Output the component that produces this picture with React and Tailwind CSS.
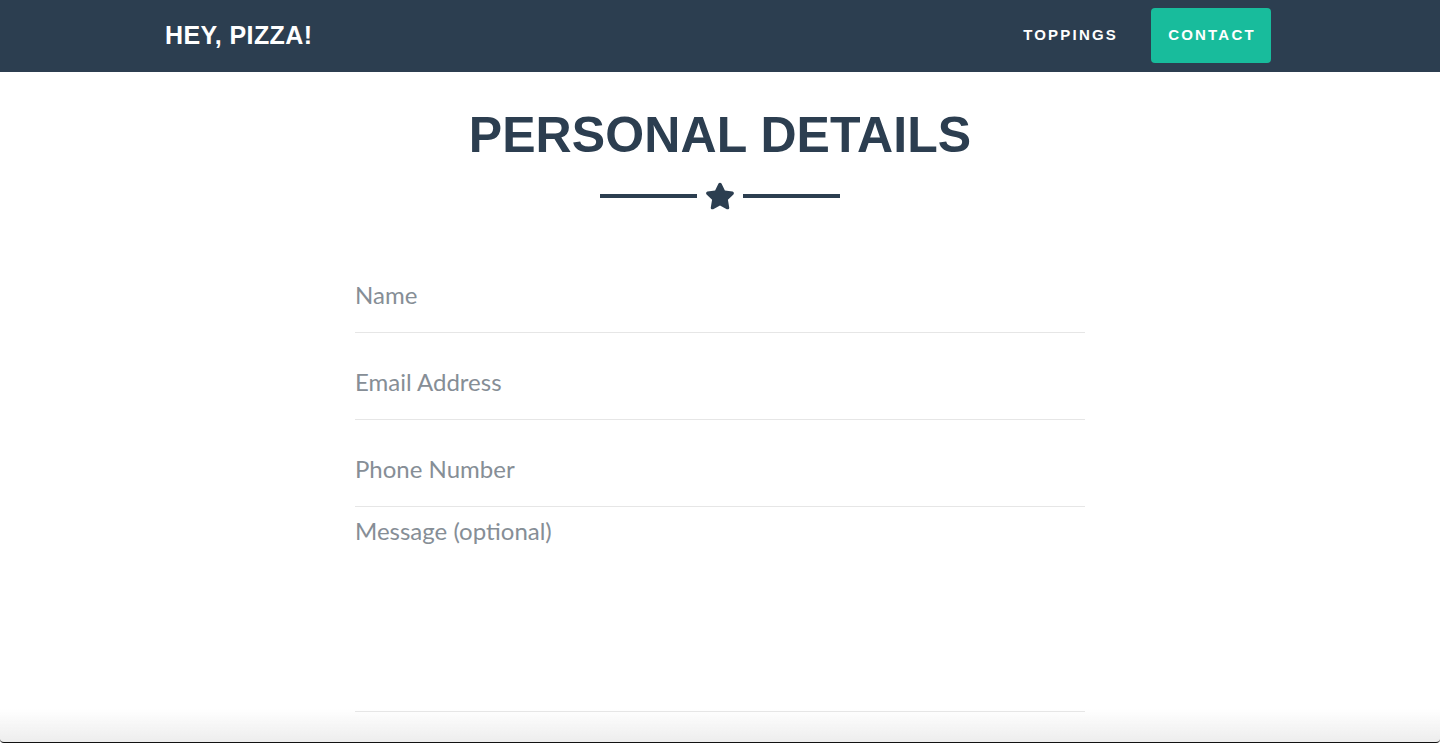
const navFont = { fontFamily: '"Liberation Sans", Arial, sans-serif' };

const Star = () => (
  <svg width="30" height="28" viewBox="0 0 576 512" className="fill-[#2c3e50]">
    <path d="M259.3 17.8L194 150.2 47.9 171.5c-26.2 3.8-36.7 36.1-17.7 54.6l105.7 103-25 145.5c-4.5 26.3 23.2 46 46.4 33.7L288 439.6l130.7 68.7c23.2 12.2 50.9-7.4 46.4-33.7l-25-145.5 105.7-103c19-18.5 8.5-50.8-17.7-54.6L382 150.2 316.7 17.8c-11.7-23.6-45.6-23.9-57.4 0z" />
  </svg>
);

const Field = ({ placeholder, type = "text" }) => (
  <div className="pt-[35px] pb-[23px] border-b border-[#e6e6e6]">
    <input
      type={type}
      placeholder={placeholder}
      className="block w-full h-[28px] text-[24px] leading-[28px] text-[#2c3e50] placeholder:text-[#868e96] outline-none bg-transparent"
    />
  </div>
);

const App = () => {
  return (
    <div className="min-h-[743px] bg-white" style={{ fontFamily: 'Lato, "Open Sans", sans-serif' }}>
      <nav className="h-[72px] bg-[#2c3e50]">
        <div className="w-[1110px] mx-auto h-full flex items-center justify-between pb-[1px]" style={navFont}>
          <a className="text-white text-[25px] font-bold tracking-[0.4px]">HEY, PIZZA!</a>
          <div className="flex items-center gap-[33px] pr-[4px]">
            <a className="text-white text-[15px] font-bold tracking-[2.2px]">TOPPINGS</a>
            <a className="w-[120px] h-[55px] rounded-[4px] bg-[#18bc9c] text-white text-[15px] font-bold tracking-[2.2px] flex items-center justify-center pl-[2px]">
              CONTACT
            </a>
          </div>
        </div>
      </nav>

      <section>
        <h2
          className="mt-[33px] text-center text-[50px] leading-[60px] font-bold text-[#2c3e50] tracking-[0.1px]"
          style={navFont}
        >
          PERSONAL DETAILS
        </h2>
        <div className="mt-[17px] h-[28px] flex items-center justify-center gap-[8px]">
          <div className="w-[97px] h-[4px] bg-[#2c3e50]" />
          <Star />
          <div className="w-[97px] h-[4px] bg-[#2c3e50]" />
        </div>

        <form className="w-[730px] mx-auto mt-[36px]">
          <Field placeholder="Name" />
          <Field placeholder="Email Address" type="email" />
          <Field placeholder="Phone Number" type="tel" />
          <div className="pt-[10px] border-b border-[#e6e6e6]">
            <textarea
              placeholder="Message (optional)"
              className="block w-full h-[194px] text-[24px] leading-[28px] text-[#2c3e50] placeholder:text-[#868e96] outline-none resize-none bg-transparent"
            />
          </div>
        </form>
      </section>

      <div className="pointer-events-none fixed bottom-0 inset-x-0 h-[34px] bg-linear-to-b from-white/0 to-[#ededed] border-b border-[#111] rounded-b-[4px]" />
    </div>
  );
};

export default App;
